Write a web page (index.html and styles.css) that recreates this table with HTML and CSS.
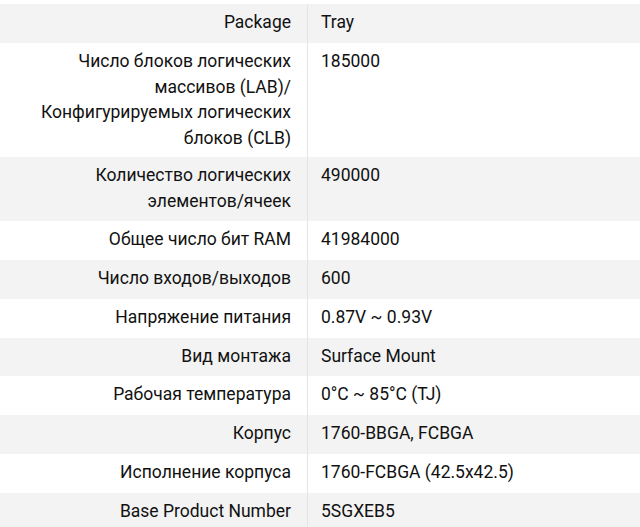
FILE: index.html
```html
<!DOCTYPE html>
<html lang="ru">
<head>
<meta charset="utf-8">
<title>Характеристики</title>
<link rel="stylesheet" href="styles.css">
</head>
<body>
<table class="specs">
  <tbody>
    <tr><th class="label">Package</th><td class="value">Tray</td></tr>
    <tr><th class="label">Число блоков логических массивов (LAB)/ Конфигурируемых логических блоков (CLB)</th><td class="value">185000</td></tr>
    <tr><th class="label">Количество логических элементов/ячеек</th><td class="value">490000</td></tr>
    <tr><th class="label">Общее число бит RAM</th><td class="value">41984000</td></tr>
    <tr><th class="label">Число входов/выходов</th><td class="value">600</td></tr>
    <tr><th class="label">Напряжение питания</th><td class="value">0.87V ~ 0.93V</td></tr>
    <tr><th class="label">Вид монтажа</th><td class="value">Surface Mount</td></tr>
    <tr><th class="label">Рабочая температура</th><td class="value">0°C ~ 85°C (TJ)</td></tr>
    <tr><th class="label">Корпус</th><td class="value">1760-BBGA, FCBGA</td></tr>
    <tr><th class="label">Исполнение корпуса</th><td class="value">1760-FCBGA (42.5x42.5)</td></tr>
    <tr><th class="label">Base Product Number</th><td class="value">5SGXEB5</td></tr>
  </tbody>
</table>
</body>
</html>
```
FILE: styles.css
```css
html, body {
  margin: 0;
  padding: 0;
  overflow: hidden;
  background: #ffffff;
}

body {
  padding-top: 4px;
  font-family: Roboto, "Noto Sans", sans-serif;
  font-size: 17.5px;
  color: #111111;
}

.specs {
  width: 640px;
  border-collapse: collapse;
  border-spacing: 0;
  table-layout: fixed;
}

.specs tr:nth-child(odd) {
  background: #f3f3f3;
}

.label {
  width: 291px;
  padding: 6px 16px 6px 0;
  text-align: right;
  font-weight: normal;
  line-height: 25.6px;
  vertical-align: top;
  border-right: 1px solid #e4e4e4;
}

.value {
  padding: 6px 8px 7.4px 13px;
  text-align: left;
  line-height: 25.6px;
  vertical-align: top;
}
```
